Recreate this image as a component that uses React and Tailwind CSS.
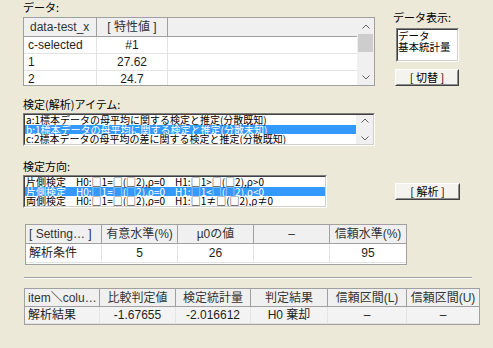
import React from 'react';

const gridFont = "font-['Liberation_Sans','Noto_Sans_CJK_JP',sans-serif]";
const uiFont = "font-['Noto_Sans_CJK_JP',sans-serif]";

function Chevron({ up }) {
  return (
    <svg width="8" height="5" viewBox="0 0 8 5">
      <polyline
        points={up ? '0.5,4.5 4,1 7.5,4.5' : '0.5,0.5 4,4 7.5,0.5'}
        fill="none"
        stroke="#606060"
        strokeWidth="1"
      />
    </svg>
  );
}

function Sunken({ className, children }) {
  return (
    <div className={`border border-t-[#808080] border-l-[#808080] border-r-white border-b-white ${className}`}>
      <div className="h-full w-full border border-t-[#404040] border-l-[#404040] border-r-[#d4d0c8] border-b-[#d4d0c8] bg-white overflow-hidden">
        {children}
      </div>
    </div>
  );
}

function Button({ label, className }) {
  return (
    <div className={`border border-t-white border-l-white border-r-[#404040] border-b-[#404040] ${className}`}>
      <div className={`h-full w-full border border-t-[#f4f3ee] border-l-[#f4f3ee] border-r-[#8c8c8c] border-b-[#8c8c8c] bg-[#f4f3ee] flex items-center justify-center text-[11px] leading-none ${uiFont}`}>
        {label}
      </div>
    </div>
  );
}

const items = [
  'a:1標本データの母平均に関する検定と推定(分散既知)',
  'b:1標本データの母平均に関する検定と推定(分散未知)',
  'c:2標本データの母平均の差に関する検定と推定(分散既知)',
];

const directions = [
  '片側検定　H0:□1=□(□2),ρ=0　H1:□1>□(□2),ρ>0',
  '片側検定　H0:□1=□(□2),ρ=0　H1:□1<□(□2),ρ<0',
  '両側検定　H0:□1=□(□2),ρ=0　H1:□1≠□(□2),ρ≠0',
];

const settingCols = [
  { w: 'w-[76px]', head: '[ Setting… ]', val: '解析条件', left: true },
  { w: 'w-[76px]', head: '有意水準(%)', val: '5' },
  { w: 'w-[76px]', head: 'µ0の値', val: '26' },
  { w: 'w-[76px]', head: '–', val: '' },
  { w: 'flex-1', head: '信頼水準(%)', val: '95' },
];

const resultCols = [
  { w: 'w-[75px]', head: 'item＼colu…', val: '解析結果', left: true },
  { w: 'w-[76px]', head: '比較判定値', val: '-1.67655' },
  { w: 'w-[75px]', head: '検定統計量', val: '-2.016612' },
  { w: 'w-[77px]', head: '判定結果', val: 'H0 棄却' },
  { w: 'w-[79px]', head: '信頼区間(L)', val: '–' },
  { w: 'flex-1', head: '信頼区間(U)', val: '–' },
];

function Grid({ cols, className, headH, rowH, rowBg }) {
  return (
    <div className={`flex flex-col border border-[#a0a0a0] bg-white overflow-hidden ${gridFont} text-[12px] ${className}`}>
      <div className={`flex ${headH} shrink-0 bg-[#f0f0f0] border-b border-[#a0a0a0] text-[#333]`}>
        {cols.map((c, i) => (
          <div
            key={i}
            className={`${c.w} flex items-center whitespace-nowrap overflow-hidden ${c.left ? 'pl-[3px]' : 'justify-center'} ${i < cols.length - 1 ? 'border-r border-[#a0a0a0]' : ''}`}
          >
            {c.head}
          </div>
        ))}
      </div>
      <div className={`flex ${rowH} shrink-0 ${rowBg} border-b border-[#e3e3e3] text-[#1e1e1e]`}>
        {cols.map((c, i) => (
          <div
            key={i}
            className={`${c.w} flex items-center whitespace-nowrap overflow-hidden ${c.left ? 'pl-[3px]' : 'justify-center'} ${i < cols.length - 1 ? 'border-r border-[#e3e3e3]' : ''}`}
          >
            {c.val}
          </div>
        ))}
      </div>
    </div>
  );
}

export default function App() {
  const dataRows = [
    ['c-selected', '#1'],
    ['1', '27.62'],
    ['2', '24.7'],
  ];

  return (
    <div className="w-[493px] h-[348px] bg-[#ece9d8] overflow-hidden text-black pl-[23px]">
      {/* data area */}
      <div className="flex">
        <div className="w-[352px]">
          <div className={`h-[17px] pt-[1px] text-[11px] leading-[13px] ${uiFont}`}>データ:</div>
          <div className={`flex h-[69px] border border-[#a0a0a0] bg-white ${gridFont} text-[12px]`}>
            <div className="flex-1 flex flex-col overflow-hidden">
              <div className="flex h-[19px] shrink-0 bg-[#f0f0f0] border-b border-[#a0a0a0] text-[#333]">
                <div className="w-[73px] flex items-center pl-[6px] border-r border-[#a0a0a0]">data-test_x</div>
                <div className="w-[71px] flex items-center justify-center border-r border-[#a0a0a0]">[ 特性値 ]</div>
                <div className="flex-1" />
              </div>
              {dataRows.map((r, i) => (
                <div key={i} className="flex h-[17px] shrink-0 border-b border-[#e3e3e3] text-[#1e1e1e]">
                  <div className="w-[73px] flex items-center pl-[4px] border-r border-[#e3e3e3]">{r[0]}</div>
                  <div className="w-[71px] flex items-center justify-center border-r border-[#e3e3e3]">{r[1]}</div>
                  <div className="flex-1" />
                </div>
              ))}
            </div>
            <div className="w-[17px] flex flex-col bg-[#f0f0f0]">
              <div className="h-[16px] flex items-center justify-center"><Chevron up /></div>
              <div className="h-[18px] mx-[1px] bg-[#cdcdcd]" />
              <div className="flex-1" />
              <div className="h-[16px] flex items-center justify-center"><Chevron /></div>
            </div>
          </div>
        </div>
        <div className="ml-[18px] w-[68px] pt-[11px]">
          <div className={`h-[13px] text-[11px] leading-[13px] ${uiFont}`}>データ表示:</div>
          <Sunken className="mt-[4px] ml-[3px] w-[63px] h-[34px]">
            <div className={`text-[10.5px] leading-[11px] ${uiFont}`}>
              <div>データ</div>
              <div>基本統計量</div>
            </div>
          </Sunken>
          <Button label="[ 切替 ]" className="mt-[7px] ml-[2px] w-[64px] h-[17px]" />
        </div>
      </div>

      {/* analysis items */}
      <div className={`mt-[12px] h-[15px] text-[11px] leading-[13px] ${uiFont}`}>検定(解析)アイテム:</div>
      <Sunken className="w-[352px] h-[33px]">
        <div className="flex h-full">
          <div className={`flex-1 text-[10px] leading-[9.5px] ${uiFont}`}>
            {items.map((t, i) => (
              <div key={i} className={`h-[9.5px] pl-[1px] whitespace-nowrap ${i === 1 ? 'bg-[#3399ff] text-white' : ''}`}>{t}</div>
            ))}
          </div>
          <div className="w-[17px] flex flex-col justify-between bg-[#f0f0f0] py-[3px]">
            <div className="flex justify-center"><Chevron up /></div>
            <div className="flex justify-center"><Chevron /></div>
          </div>
        </div>
      </Sunken>

      {/* direction */}
      <div className={`mt-[14px] h-[15px] text-[11px] leading-[13px] ${uiFont}`}>検定方向:</div>
      <div className="flex items-start">
        <Sunken className="w-[304px] h-[33px]">
          <div className={`text-[10px] leading-[9.5px] ${uiFont}`}>
            {directions.map((t, i) => (
              <div key={i} className={`h-[9.5px] pl-[1px] whitespace-nowrap ${i === 1 ? 'bg-[#3399ff] text-white' : ''}`}>{t}</div>
            ))}
          </div>
        </Sunken>
        <Button label="[ 解析 ]" className="mt-[8px] ml-[68px] w-[65px] h-[17px]" />
      </div>

      {/* settings */}
      <Grid cols={settingCols} className="mt-[16px] ml-[2px] w-[382px] h-[41px]" headH="h-[19px]" rowH="h-[19px]" rowBg="bg-white" />

      {/* separator */}
      <div className="mt-[12px] ml-[1px] w-[448px] border-t border-[#a0a0a0] border-b border-b-white" />

      {/* results */}
      <Grid cols={resultCols} className="mt-[9px] ml-[1px] w-[456px] h-[37px]" headH="h-[18px]" rowH="h-[17px]" rowBg="bg-[#f3f3f3]" />
    </div>
  );
}
